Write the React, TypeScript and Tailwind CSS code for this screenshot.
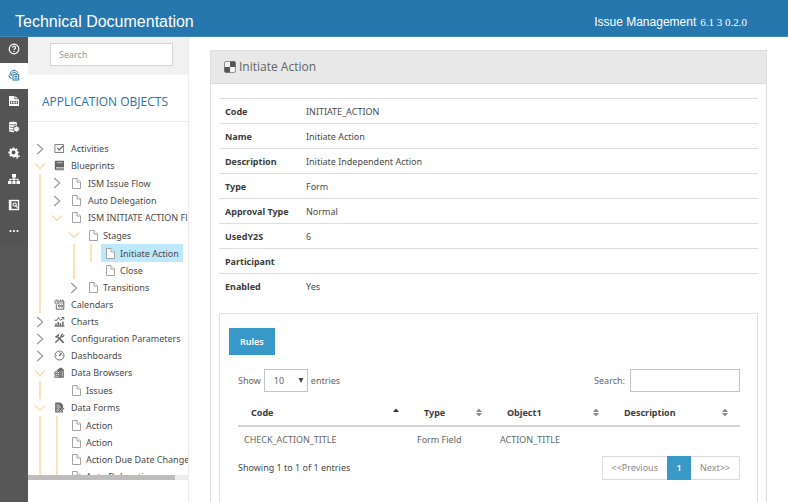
import type { ReactNode } from "react";

const svg = "block h-full w-full";

const HelpIcon = () => (
  <svg viewBox="0 0 12 12" className={svg} fill="none" stroke="currentColor">
    <circle cx="6" cy="6" r="4.800" strokeWidth="1.200" />
    <path d="M4.500 4.800a1.500 1.500 0 1 1 2.200 1.200c-.5.3-.7.5-.7 1.100" strokeWidth="1.200" />
    <path d="M6 7.900v1.200" strokeWidth="1.300" />
  </svg>
);
const ObjectsIcon = () => (
  <svg viewBox="0 0 12 12" className={svg} fill="none" stroke="currentColor" strokeWidth="1">
    <path d="M3.800 9.200H2.500L.9 6.500 2.200 5.200C2.200 3 3.800 1.300 6 1.300c1.800 0 3 .9 3.500 2.400" />
    <path d="M3.300 7V5L6 2.900l3.500 2.300" />
    <rect x="5" y="5.800" width="5.700" height="5.200" />
    <path d="M6.300 7.600h3.200M6.300 9.200h3.200" />
  </svg>
);
const FileImageIcon = () => (
  <svg viewBox="0 0 12 12" className={svg} fill="currentColor">
    <path d="M1 1h5.500v3.200H11V11H1z" />
    <path d="M7.300 1.200 10.200 3.500H7.300z" />
    <path d="M2 6h8v3H2z" fill="#545454" />
    <path d="M2.800 6.500h1.500v2H2.800zM5.200 6.500h1.500v2H5.200zM7.600 6.500h1.500v2H7.600z" />
  </svg>
);
const DatabaseGearIcon = () => (
  <svg viewBox="0 0 12 12" className={svg}>
    <path d="M1 2c0-.7 1.700-1.200 4-1.200S9 1.300 9 2v8c0 .7-1.700 1.200-4 1.200S1 10.700 1 10z" fill="currentColor" />
    <path d="M1.500 3.300c1.500.8 5.500.8 7 0M1.500 5.800c1.500.8 4 .8 5 .3M1.500 8.400c1.200.7 2.800.7 3.600.5" fill="none" stroke="#545454" strokeWidth=".8" />
    <circle cx="8.500" cy="8" r="3.400" fill="#545454" />
    <circle cx="8.500" cy="8" r="1.700" fill="none" stroke="currentColor" strokeWidth="1.300" />
    <path d="M8.500 5v6M5.500 8h6M6.400 5.900l4.200 4.200M10.600 5.900l-4.200 4.200" stroke="currentColor" strokeWidth=".7" />
  </svg>
);
const GearPlusIcon = () => (
  <svg viewBox="0 0 12 12" className={svg} fill="none" stroke="currentColor">
    <circle cx="5.500" cy="5.500" r="3" strokeWidth="2" />
    <path d="M5.500.4v2M5.500 8.600v2M.4 5.500h2M8.600 5.500h2M1.900 1.900l1.400 1.400M7.700 3.300l1.400-1.400M1.900 9.100l1.400-1.400" strokeWidth="1.900" />
    <path d="M9.200 6.800v5M6.700 9.300h5" strokeWidth="1.400" />
  </svg>
);
const SitemapIcon = () => (
  <svg viewBox="0 0 12 12" className={svg} fill="currentColor">
    <path d="M4 1h4v3.400H6.600v1.400h4V8H12v3H8.500V8h1.100V6.800h-3V8h1v3H4.400V8h1V6.800h-3V8h1.100v3H0V8h1.400V5.800h4V4.400H4z" />
  </svg>
);
const SearchDocIcon = () => (
  <svg viewBox="0 0 12 12" className={svg} fill="none" stroke="currentColor">
    <rect x="1.500" y="1.500" width="9" height="9" strokeWidth="1.400" />
    <path d="M2.500 1v10" strokeWidth="2" />
    <circle cx="6.700" cy="5.600" r="1.600" strokeWidth="1.100" />
    <path d="m7.800 6.900 1.600 1.800" strokeWidth="1.200" />
  </svg>
);
const MoreIcon = () => (
  <svg viewBox="0 0 12 12" className={svg} fill="currentColor">
    <circle cx="2.500" cy="6" r="1.100" />
    <circle cx="6" cy="6" r="1.100" />
    <circle cx="9.500" cy="6" r="1.100" />
  </svg>
);

const ActivitiesIcon = () => (
  <svg viewBox="0 0 11 11" className={svg} fill="none" stroke="currentColor">
    <path d="M9.500 1.500H.9v8h8.700z" strokeWidth=".8" />
    <path d="m3 4.800 2.200 2.200L9 3" strokeWidth="1.200" />
  </svg>
);
const BookIcon = () => (
  <svg viewBox="0 0 11 11" className={svg}>
    <path d="M2 .8h8v9.400H2C1.200 10.200.8 9.700.8 9V2C.8 1.200 1.200.8 2 .8z" fill="currentColor" />
    <path d="M2 7.500h8M2 9h8M3 2.700h5.500" stroke="#fff" strokeWidth=".6" />
  </svg>
);
const CalendarIcon = () => (
  <svg viewBox="0 0 11 11" className={svg} fill="none" stroke="currentColor">
    <path d="M5.500 2h4.300v8.200H2.300V6" />
    <circle cx="2.900" cy="3" r="2.100" strokeWidth=".9" />
    <path d="M2.900 1.800V3.200h1M6.500.6v2M8.700.6v2M5.500 4h4M4.500 6H6v2H4.500zM7 6h1.500v2H7z" strokeWidth=".8" />
  </svg>
);
const ChartIcon = () => (
  <svg viewBox="0 0 11 11" className={svg} fill="none" stroke="currentColor">
    <path d="M.6 4.300h2.200L4.500 1.500l2 2.800 3-2.300M7.500 1.500h2.300v2" />
    <path d="M.4 10.200h10.200" />
    <path d="M2 10V7.500M4.200 10V6M6.500 10V7M8.900 10V5.500" strokeWidth="1.500" />
  </svg>
);
const ToolsIcon = () => (
  <svg viewBox="0 0 11 11" className={svg} fill="none" stroke="currentColor">
    <path d="m9.700 9.900-6-6" strokeWidth="1.500" />
    <path d="M.9 4 4.300.9 5.500 2 2.300 5.100z" fill="currentColor" stroke="none" />
    <path d="m1.300 9.800 6-6" strokeWidth="1.300" />
    <path d="M8.900.9 7.400 2.300v1.300h1.400l1.400-1.400" strokeWidth="1.200" />
  </svg>
);
const GaugeIcon = () => (
  <svg viewBox="0 0 11 11" className={svg} fill="none" stroke="currentColor">
    <circle cx="5.500" cy="5.500" r="4.500" strokeWidth=".9" />
    <path d="m5.200 6 2.500-3" strokeWidth="1.200" />
    <path d="M2.300 5.500h.8M5.500 2.200v.7M8 5.500h.7" strokeWidth=".7" />
  </svg>
);
const BrowserIcon = () => (
  <svg viewBox="0 0 11 11" className={svg}>
    <path d="M3.500 2.200 7 .5l2.800 2v8.200H5z" fill="currentColor" />
    <circle cx="3.200" cy="6.500" r="2.600" fill="#fff" stroke="currentColor" />
    <path d="M.8 6.500h4.800M3.200 4v5M1.500 8.300.5 10.300H5" stroke="currentColor" strokeWidth=".9" fill="none" />
    <path d="M7 3.500v6M8.500 3.500v6" stroke="#fff" strokeWidth=".4" />
  </svg>
);
const FormIcon = () => (
  <svg viewBox="0 0 11 11" className={svg}>
    <path d="M1.200.6h5.300L9 3v7.500H1.200z" fill="currentColor" />
    <path d="M2.500 3h3M2.500 5H7M2.500 7h3M2.500 8.800H5" stroke="#fff" strokeWidth=".8" />
    <path d="m6 9 3.500-3.500 1 1L7 10H6z" fill="currentColor" stroke="#fff" strokeWidth=".5" />
  </svg>
);
const PageIcon = () => (
  <svg viewBox="0 0 11 11" className={svg} fill="#fff" stroke="#9a9a9a" strokeWidth=".9">
    <path d="M1.500.5H6L9.500 4v6.500h-8z" />
    <path d="M6 .5V4h3.500" />
  </svg>
);
const CheckerIcon = () => (
  <svg viewBox="0 0 12 12" className="h-3 w-3 shrink-0 text-[#555]">
    <rect x=".5" y=".5" width="11" height="11" rx="1.500" fill="#f4f4f4" stroke="currentColor" strokeWidth=".6" />
    <path d="M6 .5h4.500q1 0 1 1V6H6zM.5 6H6v5.500H1.500q-1 0-1-1z" fill="currentColor" />
  </svg>
);

const RAIL = [
  { label: "Help", Icon: HelpIcon },
  { label: "Application objects", Icon: ObjectsIcon, active: true },
  { label: "Files", Icon: FileImageIcon },
  { label: "Data", Icon: DatabaseGearIcon },
  { label: "Configuration", Icon: GearPlusIcon },
  { label: "Hierarchy", Icon: SitemapIcon },
  { label: "Lookup", Icon: SearchDocIcon },
  { label: "More", Icon: MoreIcon },
];

/* Lead cells of a tree row: "|" guide line, "." blank, ">" collapsed, "v" expanded. */
type Node = { lead: string; icon: ReactNode; label: string; first?: boolean; selected?: boolean };

const page = <PageIcon />;
const TREE: Node[] = [
  { lead: ">", icon: <ActivitiesIcon />, label: "Activities" },
  { lead: "v", icon: <BookIcon />, label: "Blueprints" },
  { lead: "|>", icon: page, label: "ISM Issue Flow", first: true },
  { lead: "|>", icon: page, label: "Auto Delegation" },
  { lead: "|v", icon: page, label: "ISM INITIATE ACTION Fl" },
  { lead: "|.v", icon: page, label: "Stages", first: true },
  { lead: "|.||", icon: page, label: "Initiate Action", first: true, selected: true },
  { lead: "|.|.", icon: page, label: "Close" },
  { lead: "|.>", icon: page, label: "Transitions" },
  { lead: "|", icon: <CalendarIcon />, label: "Calendars" },
  { lead: ">", icon: <ChartIcon />, label: "Charts" },
  { lead: ">", icon: <ToolsIcon />, label: "Configuration Parameters" },
  { lead: ">", icon: <GaugeIcon />, label: "Dashboards" },
  { lead: "v", icon: <BrowserIcon />, label: "Data Browsers" },
  { lead: "|.", icon: page, label: "Issues", first: true },
  { lead: "v", icon: <FormIcon />, label: "Data Forms" },
  { lead: "||", icon: page, label: "Action", first: true },
  { lead: "||", icon: page, label: "Action" },
  { lead: "||", icon: page, label: "Action Due Date Change" },
  { lead: "||", icon: page, label: "Auto Delegation" },
];

function LeadCell({ kind }: { kind: string }) {
  if (kind === "|") {
    return (
      <span className="flex w-[17px] shrink-0 pl-2">
        <span className="w-0.5 bg-[#fde2b9]" />
      </span>
    );
  }
  return (
    <span className="flex w-[17px] shrink-0 items-center justify-center">
      {kind === ">" && (
        <svg viewBox="0 0 8 12" className="h-3 w-2" fill="none" stroke="#9a9a9a" strokeWidth="1.200">
          <path d="m1.200 1 5.500 5-5.500 5" />
        </svg>
      )}
      {kind === "v" && (
        <svg viewBox="0 0 12 8" className="h-2 w-3" fill="none" stroke="#fbd7a0" strokeWidth="1.200">
          <path d="m1 1.500 5 5 5-5" />
        </svg>
      )}
    </span>
  );
}

function TreeRow({ node }: { node: Node }) {
  const wide = node.lead.length === 1 || node.lead === "|>" || node.lead === "|v";
  return (
    <li
      role="treeitem"
      aria-level={node.lead.length}
      aria-selected={!!node.selected}
      className={`flex ${node.first ? "h-[18px]" : "h-[17px]"}`}
    >
      {node.lead.split("").map((kind, i) => (
        <LeadCell key={i} kind={kind} />
      ))}
      <a
        href="#"
        className={`ml-0.5 flex shrink-0 items-center px-1 whitespace-nowrap ${wide ? "gap-1.5" : "gap-1"} ${
          node.selected ? "bg-[#bee8fb]" : ""
        }`}
      >
        <span className="h-[11px] w-[11px] shrink-0 text-[#666]">{node.icon}</span>
        {node.label}
      </a>
    </li>
  );
}

const DETAILS = [
  ["Code", "INITIATE_ACTION"],
  ["Name", "Initiate Action"],
  ["Description", "Initiate Independent Action"],
  ["Type", "Form"],
  ["Approval Type", "Normal"],
  ["UsedY2S", "6"],
  ["Participant", ""],
  ["Enabled", "Yes"],
];

const COLUMNS = [
  { name: "Code", width: "w-[173px]", sorted: true },
  { name: "Type", width: "w-[83px]" },
  { name: "Object1", width: "w-[117px]" },
  { name: "Description", width: "" },
];

function SortMark({ sorted }: { sorted?: boolean }) {
  return (
    <svg viewBox="0 0 6 9" className="h-[9px] w-1.5 shrink-0">
      {sorted ? (
        <path d="M0 4h6L3 .5z" fill="#333" />
      ) : (
        <path d="M0 4h6L3 .5zM0 5h6L3 8.500z" fill="#8a8a8a" />
      )}
    </svg>
  );
}

export default function App() {
  return (
    <div className="flex h-screen flex-col overflow-hidden bg-white font-['Noto_Sans','Open_Sans',sans-serif] text-[9px] leading-[17px] text-[#4a4a4a]">
      <header className="flex h-[37px] shrink-0 items-end justify-between border-b border-[#3f88ba] bg-[#2677ae] pr-[41px] pb-1 pl-[15px] font-['Liberation_Sans',Arial,sans-serif] text-white">
        <h1 className="text-base leading-5">Technical Documentation</h1>
        <p className="flex items-baseline gap-1 text-xs leading-5">
          Issue Management <span className="font-['Liberation_Serif',serif] text-[11px]">6.1 3 0.2.0</span>
        </p>
      </header>

      <div className="flex min-h-0 flex-1">
        <nav className="w-7 shrink-0 bg-[#575757]">
          {RAIL.map(({ label, Icon, active }) => (
            <button
              key={label}
              type="button"
              aria-label={label}
              className={`flex h-[26px] w-full items-center justify-center pb-[3px] ${
                active ? "bg-white text-[#2f74a5]" : "bg-[#545454] text-white"
              }`}
            >
              <span className="h-3 w-3">
                <Icon />
              </span>
            </button>
          ))}
        </nav>

        <aside className="flex w-[161px] shrink-0 flex-col border-r border-[#ececec] pb-[22px]">
          <div className="bg-[#f1f1f1] pt-1.5 pr-[15px] pb-[9px] pl-[22px]">
            <input
              type="search"
              aria-label="Search objects"
              placeholder="Search"
              className="block h-[23px] w-full border border-[#d4d4d4] bg-white px-2 placeholder:text-[#999]"
            />
          </div>
          <h2 className="border-b border-[#ececec] pt-[18px] pb-[11px] pl-3.5 font-['Open_Sans','Noto_Sans',sans-serif] text-xs leading-[17px] text-[#2a72a8]">
            APPLICATION OBJECTS
          </h2>
          <ul role="tree" className="min-h-0 flex-1 overflow-hidden pt-[18px] pl-[3px]">
            {TREE.map((node, i) => (
              <TreeRow key={i} node={node} />
            ))}
          </ul>
          <div className="h-[5px] shrink-0 bg-[#ececec]">
            <div className="h-full w-[92%] bg-[#bdbdbd]" />
          </div>
        </aside>

        <main className="flex min-w-0 flex-1 flex-col overflow-hidden pt-[13px] pr-[21px] pl-[21px]">
          <section className="flex flex-1 flex-col border border-b-0 border-[#dedede]">
            <h2 className="flex h-[33px] shrink-0 items-center gap-[3px] border-b border-[#d8d8d8] bg-[#e8e8e8] pl-[13px] font-['Open_Sans','Noto_Sans',sans-serif] text-xs text-[#666]">
              <CheckerIcon />
              Initiate Action
            </h2>
            <div className="flex flex-1 flex-col px-2 pt-3.5">
              <table className="w-full border-collapse">
                <tbody>
                  {DETAILS.map(([name, value]) => (
                    <tr key={name} className="h-[25px] border-t border-[#dedede]">
                      <th scope="row" className="w-[87px] pl-1.5 text-left font-bold whitespace-nowrap text-[#3c3c3c]">
                        {name}
                      </th>
                      <td>{value}</td>
                    </tr>
                  ))}
                </tbody>
              </table>

              <div className="mt-3.5 flex-1 border border-b-0 border-[#dfe6d8] pt-3.5 pr-[17px] pl-[9px]">
                <button type="button" className="block h-[27px] bg-[#3899c9] px-[11px] font-semibold text-white">
                  Rules
                </button>
                <div className="pt-3.5 pl-[9px] text-[#666]">
                  <div className="flex items-center justify-between">
                    <label className="flex items-center gap-[3px]">
                      Show
                      <span className="relative">
                        <select
                          defaultValue="10"
                          className="block h-[23px] w-11 appearance-none border border-[#c4c4c4] bg-white pl-[9px]"
                        >
                          <option>10</option>
                          <option>25</option>
                          <option>50</option>
                        </select>
                        <svg
                          viewBox="0 0 6 5"
                          className="pointer-events-none absolute top-[9px] right-1 h-[5px] w-1.5"
                          fill="#444"
                        >
                          <path d="M.5 0h5L3 5z" />
                        </svg>
                      </span>
                      entries
                    </label>
                    <label className="flex items-center gap-[5px]">
                      Search:
                      <input type="search" className="block h-[23px] w-[110px] border border-[#c4c4c4] bg-white px-2" />
                    </label>
                  </div>

                  <table className="mt-2 w-full table-fixed border-collapse">
                    <thead>
                      <tr className="h-[26px] border-b-2 border-[#d4d4d4] text-[#3c3c3c]">
                        {COLUMNS.map(({ name, width, sorted }) => (
                          <th key={name} scope="col" className={`${width} p-0 text-left font-bold`}>
                            <span className="flex items-center justify-between pr-3 pl-[13px]">
                              {name}
                              <SortMark sorted={sorted} />
                            </span>
                          </th>
                        ))}
                      </tr>
                    </thead>
                    <tbody>
                      <tr className="h-[26px]">
                        <td className="pl-1.5">CHECK_ACTION_TITLE</td>
                        <td className="pl-1.5">Form Field</td>
                        <td className="pl-1.5">ACTION_TITLE</td>
                        <td />
                      </tr>
                    </tbody>
                  </table>

                  <div className="mt-1 flex items-center justify-between">
                    <p className="text-[#4a4a4a]">Showing 1 to 1 of 1 entries</p>
                    <div className="flex h-6 text-[#8a8a8a]">
                      <button type="button" className="border border-r-0 border-[#dcdcdc] px-[9px]">
                        &lt;&lt;Previous
                      </button>
                      <button type="button" className="w-6 bg-[#3899c9] font-semibold text-white">
                        1
                      </button>
                      <button type="button" className="border border-l-0 border-[#dcdcdc] px-[9px]">
                        Next&gt;&gt;
                      </button>
                    </div>
                  </div>
                </div>
              </div>
            </div>
          </section>
        </main>
      </div>
    </div>
  );
}
